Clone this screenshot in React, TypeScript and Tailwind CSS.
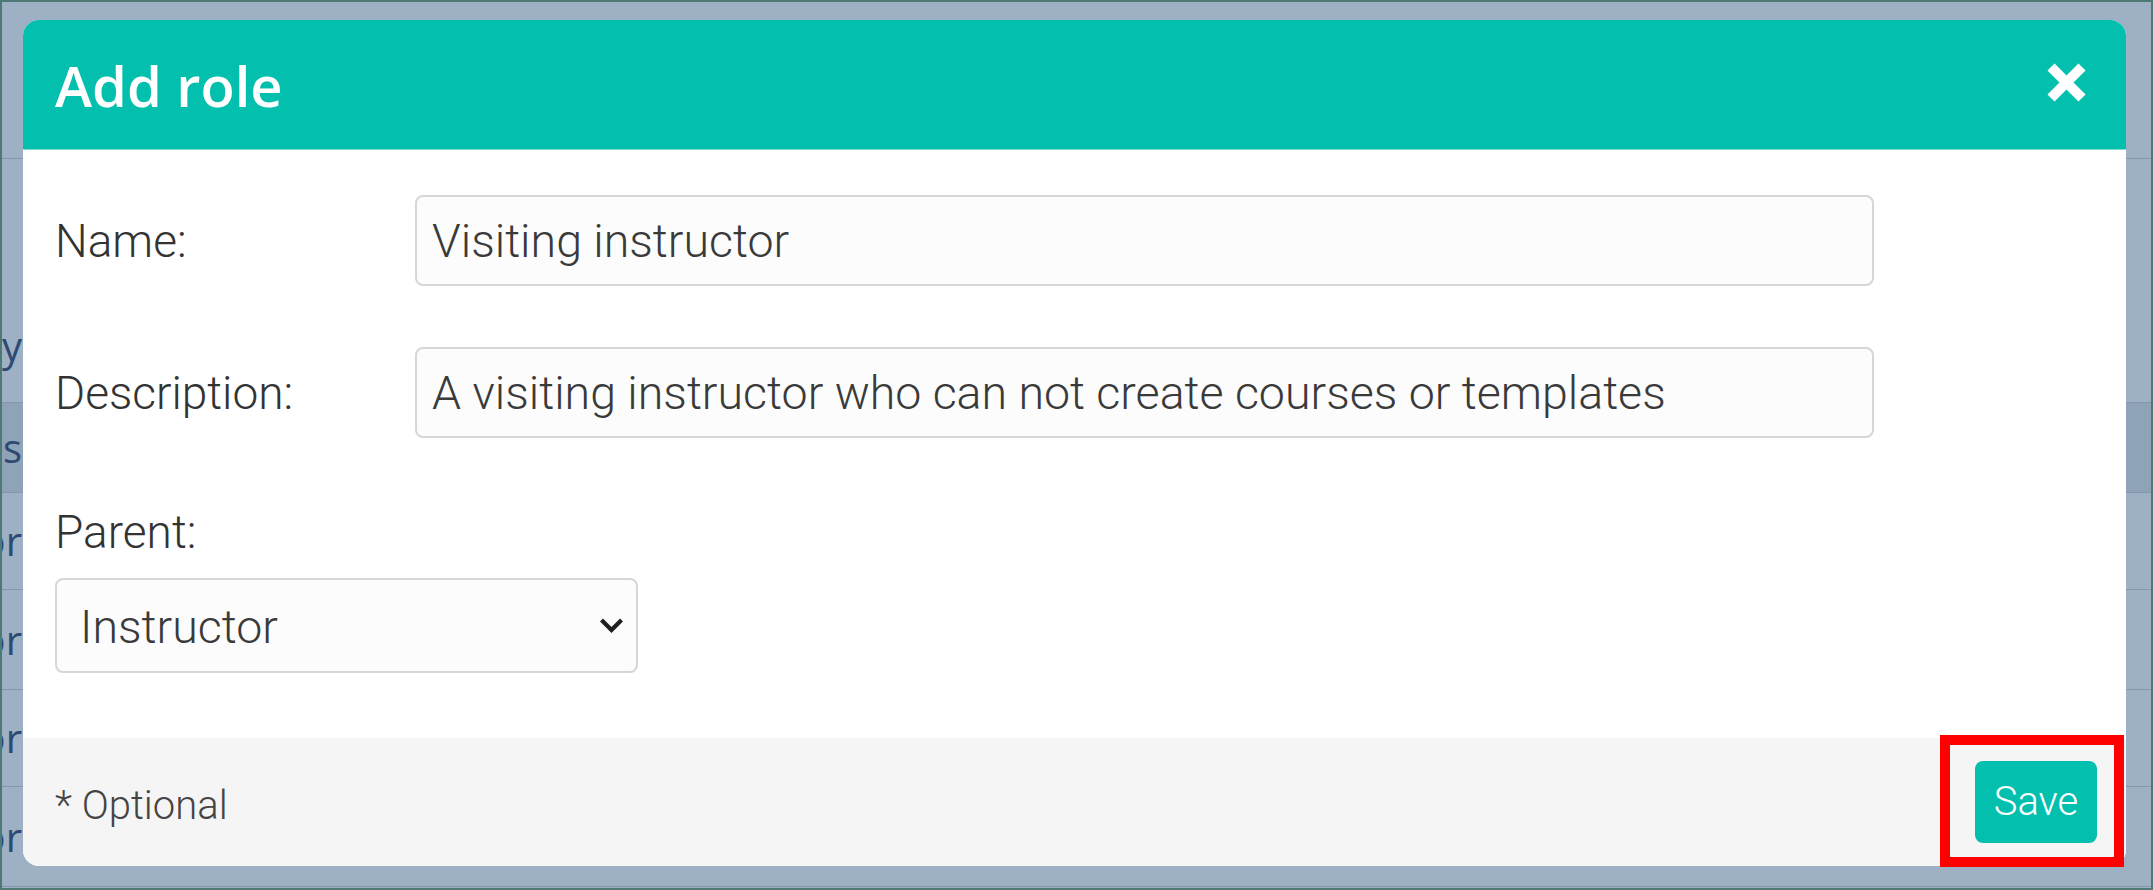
import { useState } from "react";

const rows = [
  { h: "h-[244px]", text: "Privacy", align: "items-end pb-[36px]", band: false },
  { h: "h-[90px]", text: "Roles", align: "items-center", band: true },
  { h: "h-[97px]", text: "Instructor", align: "items-center", band: false },
  { h: "h-[100px]", text: "Instructor", align: "items-center", band: false },
  { h: "h-[97px]", text: "Instructor", align: "items-center", band: false },
  { h: "h-[100px]", text: "Instructor", align: "items-center", band: false },
];

const CloseIcon = () => (
  <svg width="41" height="41" viewBox="0 0 41 41" aria-hidden="true">
    <path d="M5 5 L36 36 M36 5 L5 36" stroke="#ffffff" strokeWidth="10" strokeLinecap="butt" />
  </svg>
);

const Chevron = () => (
  <svg width="25" height="17" viewBox="0 0 25 17" aria-hidden="true">
    <path d="M2.5 3 L12.5 13 L22.5 3" fill="none" stroke="#1f1f1f" strokeWidth="4.2" />
  </svg>
);

export default function App() {
  const [name, setName] = useState("Visiting instructor");
  const [description, setDescription] = useState(
    "A visiting instructor who can not create courses or templates"
  );
  const [parent, setParent] = useState("Instructor");

  return (
    <div className="relative w-[2153px] h-[890px] overflow-hidden border-2 border-[#4d7a77] bg-[#9db0c4] font-['Roboto',sans-serif]">
      {/* table behind the dimmed overlay */}
      <div className="flex flex-col">
        <div className="h-[157px] border-b border-[#8497ab]" />
        {rows.map((row, i) => (
          <div
            key={i}
            className={`flex ${row.h} ${row.align} border-b border-[#8497ab] ${row.band ? "bg-[#8ea3b8]" : ""}`}
          >
            <div className="flex w-[20px] justify-end whitespace-nowrap font-['Open_Sans',sans-serif] text-[40px] leading-none text-[#2c4a72]">
              {row.text}
            </div>
          </div>
        ))}
      </div>

      {/* dialog */}
      <div className="absolute left-[21px] top-[18px] flex h-[846px] w-[2103px] flex-col overflow-hidden rounded-[16px] bg-white">
        <div className="flex h-[130px] items-center justify-between border-b border-[#7fdcd2] bg-[#03bfae] pl-[32px] pr-[39px]">
          <h1 className="font-['Open_Sans',sans-serif] text-[56px] font-semibold leading-none text-white">
            Add role
          </h1>
          <button className="mt-[-4px] flex items-center justify-center">
            <CloseIcon />
          </button>
        </div>

        <div className="flex-1 px-[32px] pt-[45px] text-[46px] font-light text-[#333]">
          <div className="flex items-center">
            <label className="w-[360px] leading-[54px]">Name:</label>
            <input
              value={name}
              onChange={(e) => setName(e.target.value)}
              className="h-[91px] w-[1459px] rounded-[8px] border-2 border-[#d6d6d6] bg-[#fcfcfc] px-[15px] text-[46.5px] font-light text-[#3a3a3a] outline-none"
            />
          </div>
          <div className="mt-[61px] flex items-center">
            <label className="w-[360px] leading-[54px]">Description:</label>
            <input
              value={description}
              onChange={(e) => setDescription(e.target.value)}
              className="h-[91px] w-[1459px] rounded-[8px] border-2 border-[#d6d6d6] bg-[#fcfcfc] px-[15px] text-[46.5px] font-light text-[#3a3a3a] outline-none"
            />
          </div>
          <label className="mt-[67px] block leading-[54px]">Parent:</label>
          <div className="relative mt-[19px] w-[583px]">
            <select
              value={parent}
              onChange={(e) => setParent(e.target.value)}
              className="h-[95px] w-full appearance-none rounded-[8px] border-2 border-[#d6d6d6] bg-[#fcfcfc] pl-[23px] pt-[4px] text-[46.5px] font-light text-[#3a3a3a] outline-none"
            >
              <option>Instructor</option>
              <option>Learner</option>
              <option>Administrator</option>
            </select>
            <span className="pointer-events-none absolute right-[14px] top-[39px] flex">
              <Chevron />
            </span>
          </div>
        </div>

        <div className="flex h-[128px] items-center justify-between bg-[#f5f5f5] pl-[32px] pr-[29px]">
          <span className="pt-[8px] text-[40px] font-light text-[#444]">* Optional</span>
          <button className="h-[82px] w-[122px] rounded-[8px] bg-[#03bfae] text-[40px] font-light text-white">
            Save
          </button>
        </div>
      </div>

      {/* highlight annotation */}
      <div className="pointer-events-none absolute left-[1938px] top-[733px] h-[132px] w-[184px] border-[10px] border-[#ff0000]" />
    </div>
  );
}
